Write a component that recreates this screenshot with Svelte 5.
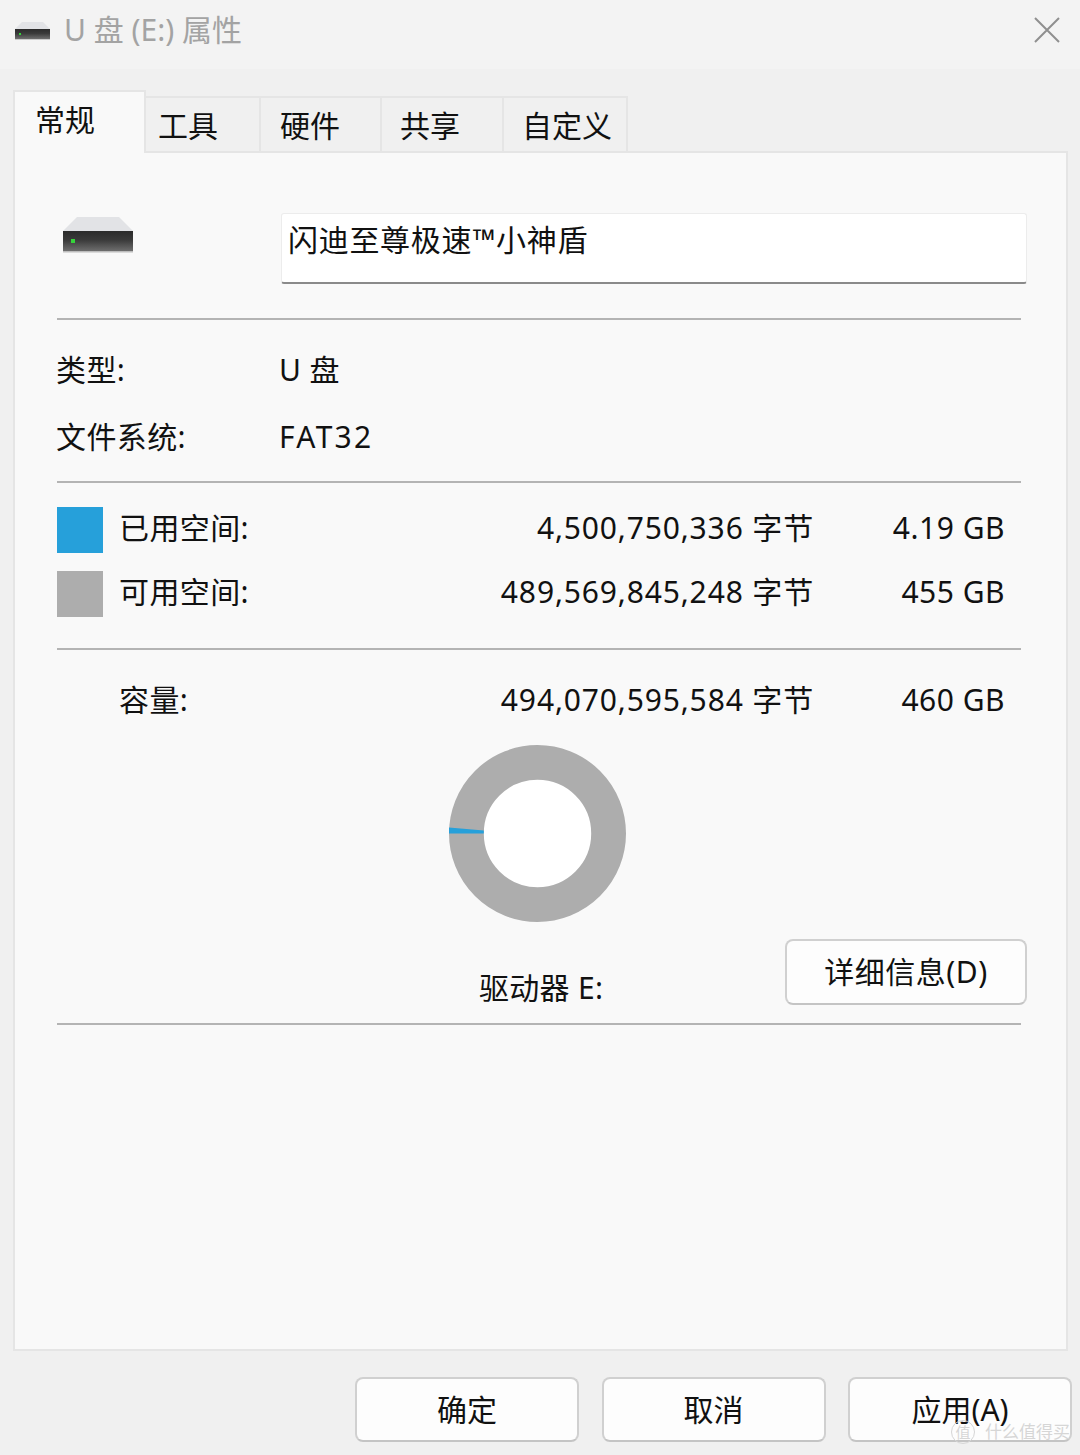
<script>
	const tabs = ['工具', '硬件', '共享', '自定义'];
	const usage = [
		{ label: '已用空间:', bytes: '4,500,750,336 字节', size: '4.19 GB', color: '#26a0da' },
		{ label: '可用空间:', bytes: '489,569,845,248 字节', size: '455 GB', color: '#adadad' }
	];
</script>

{#snippet drive(cls)}
	<svg class={cls} viewBox="0 0 70 36" aria-hidden="true">
		<defs>
			<linearGradient id="{cls}-front" x1="0" y1="0" x2="0" y2="1">
				<stop offset="0" stop-color="#2b2b2b" />
				<stop offset="0.45" stop-color="#3a3a3a" />
				<stop offset="1" stop-color="#6e6e6e" />
			</linearGradient>
		</defs>
		<path d="M14 0H56L70 14H0Z" fill="#e2e3e6" />
		<rect x="0" y="14" width="70" height="20" fill="url(#{cls}-front)" />
		<rect x="0" y="34" width="70" height="1.5" fill="#bdbdbd" />
		<rect x="8" y="22" width="4" height="4" fill="#35d33a" />
	</svg>
{/snippet}

<main class="dialog">
	<header class="titlebar">
		{@render drive('drive-small')}
		<span class="title">U 盘 (E:) 属性</span>
		<svg class="close" viewBox="0 0 26 26" aria-hidden="true">
			<path d="M1 1L25 25M25 1L1 25" stroke="#8f8f8f" stroke-width="2" fill="none" />
		</svg>
	</header>

	<div class="content">
		<nav class="tabs">
			<button class="tab active">常规</button>
			{#each tabs as tab}
				<button class="tab">{tab}</button>
			{/each}
		</nav>

		<section class="panel">
			<div class="head">
				{@render drive('drive-large')}
				<div class="name">闪迪至尊极速™小神盾</div>
			</div>
			<hr class="first" />

			<dl class="facts">
				<dt>类型:</dt>
				<dd>U 盘</dd>
				<dt>文件系统:</dt>
				<dd>FAT32</dd>
			</dl>
			<hr />

			<div class="usage">
				{#each usage as row}
					<div class="usage-row">
						<span class="swatch" style="background: {row.color}"></span>
						<span class="cell">{row.label}</span>
						<span class="cell bytes">{row.bytes}</span>
						<span class="cell size">{row.size}</span>
					</div>
				{/each}
			</div>
			<hr />

			<div class="usage-row capacity">
				<span></span>
				<span class="cell">容量:</span>
				<span class="cell bytes">494,070,595,584 字节</span>
				<span class="cell size">460 GB</span>
			</div>

			<div class="donut-wrap">
				<svg class="donut" viewBox="0 0 178 178" aria-hidden="true">
					<circle cx="89" cy="89" r="71.5" fill="#fff" stroke="#adadad" stroke-width="35" />
					<path d="M0 83L35 86V89L0 89Z" fill="#26a0da" />
				</svg>
			</div>

			<div class="drive-row">
				<span class="drive-label">驱动器 E:</span>
				<button class="btn details">详细信息(D)</button>
			</div>
			<hr class="last" />
		</section>

		<footer class="actions">
			<button class="btn action">确定</button>
			<button class="btn action">取消</button>
			<button class="btn action">应用(A)</button>
		</footer>
	</div>

	<div class="watermark"><span class="mark">值</span>什么值得买</div>
</main>

<style>
	:global(body) {
		margin: 0;
		background: #f0f0f0;
	}

	.dialog {
		position: relative;
		width: 1080px;
		height: 1455px;
		overflow: hidden;
		background: #f0f0f0;
		color: #111;
		font-family: 'Noto Sans', 'Noto Sans CJK SC', sans-serif;
		font-size: 30px;
		line-height: 40px;
	}

	/* 标题栏 */
	.titlebar {
		height: 69px;
		box-sizing: border-box;
		background: #f3f3f3;
		display: flex;
		align-items: center;
		padding: 0 20px 0 15px;
	}

	.drive-small {
		width: 35px;
		height: 18px;
		margin-bottom: 7px;
	}

	.title {
		margin-left: 14px;
		color: #a3a3a3;
		margin-bottom: 9px;
	}

	.close {
		width: 26px;
		height: 26px;
		margin-left: auto;
		margin-bottom: 9px;
	}

	.content {
		padding: 21px 12px 0 13px;
	}

	/* 选项卡 */
	.tabs {
		display: flex;
		align-items: flex-start;
		height: 63px;
		margin-bottom: -2px;
		position: relative;
		z-index: 1;
	}

	.tab {
		height: 55px;
		width: 122px;
		margin-top: 6px;
		box-sizing: border-box;
		padding: 0 0 0 18px;
		background: #f0f0f0;
		border: 2px solid #e5e5e5;
		border-bottom: none;
		border-left-width: 0;
		font: inherit;
		color: inherit;
		line-height: 56px;
		text-align: left;
	}

	.tab:nth-child(2) {
		width: 115px;
		padding-left: 12px;
	}

	.tab:nth-child(3) {
		width: 121px;
		padding-left: 19px;
	}

	.tab:nth-child(5) {
		width: 124px;
		padding-left: 18px;
	}

	.tab.active {
		height: 63px;
		width: 133px;
		margin-top: 0;
		padding: 0 0 8px 20px;
		border-left-width: 2px;
		background: #f9f9f9;
	}

	/* 面板 */
	.panel {
		height: 1200px;
		box-sizing: border-box;
		background: #f9f9f9;
		border: 2px solid #e5e5e5;
		padding: 60px 45px 0 42px;
	}

	.head {
		display: flex;
		height: 71px;
	}

	.drive-large {
		width: 70px;
		height: 36px;
		margin: 4px 0 0 6px;
	}

	.name {
		width: 746px;
		height: 71px;
		box-sizing: border-box;
		margin-left: 148px;
		margin-right: -6px;
		padding: 6px 6px;
		background: #fff;
		border: 1px solid #ececec;
		border-bottom: 2px solid #8a8a8a;
		border-radius: 3px;
		letter-spacing: 0.7px;
	}

	hr {
		height: 2px;
		margin: 0;
		border: none;
		background: #b4b4b4;
	}

	hr.first {
		margin-top: 34px;
	}

	.facts {
		display: grid;
		grid-template-columns: 223px 1fr;
		grid-auto-rows: 40px;
		row-gap: 27px;
		margin: 30px 0 24px -1px;
		letter-spacing: 0.4px;
	}

	.facts dt,
	.facts dd {
		margin: 0;
	}

	.facts dd:last-child {
		letter-spacing: 2.3px;
	}

	.usage {
		display: flex;
		flex-direction: column;
		gap: 18px;
		margin: 24px 0 31px;
	}

	.usage-row {
		display: grid;
		grid-template-columns: 46px 1fr auto 175px;
		column-gap: 17px;
		align-items: center;
		height: 46px;
		padding-right: 16px;
	}

	.swatch {
		width: 46px;
		height: 46px;
	}

	.cell {
		margin: -4px 0 0 -1px;
		letter-spacing: 0.4px;
	}

	.bytes,
	.size {
		text-align: right;
	}

	.bytes {
		letter-spacing: 0.85px;
		margin-right: -1px;
	}

	.size {
		letter-spacing: 0.5px;
	}

	.capacity {
		margin-top: 29px;
	}

	.donut-wrap {
		display: flex;
		justify-content: center;
		margin: 20px 0 0 -3px;
	}

	.donut {
		width: 177px;
		height: 177px;
		display: block;
	}

	.drive-row {
		display: flex;
		height: 66px;
		margin: 17px -6px 0 0;
		padding-left: 422px;
	}

	.drive-label {
		margin-top: 29px;
		letter-spacing: 0.3px;
	}

	/* 按钮 */
	.btn {
		box-sizing: border-box;
		background: #fdfdfd;
		border: 2px solid #d0d0d0;
		border-bottom-color: #c4c4c4;
		border-radius: 8px;
		font: inherit;
		color: inherit;
		padding: 0;
	}

	.details {
		width: 242px;
		height: 66px;
		margin-left: auto;
		letter-spacing: 0.5px;
	}

	hr.last {
		margin-top: 18px;
	}

	.actions {
		display: flex;
		gap: 22.5px;
		justify-content: flex-end;
		margin: 26px -4px 0 0;
	}

	.action {
		width: 224px;
		height: 65px;
	}

	/* 水印 */
	.watermark {
		position: absolute;
		right: 10px;
		bottom: 11px;
		display: flex;
		align-items: center;
		color: #d6d6d6;
		font-size: 17px;
		line-height: 24px;
	}

	.mark {
		width: 22px;
		height: 22px;
		margin-right: 10px;
		border: 1px solid #d6d6d6;
		border-radius: 50%;
		font-size: 15px;
		line-height: 22px;
		text-align: center;
	}
</style>
